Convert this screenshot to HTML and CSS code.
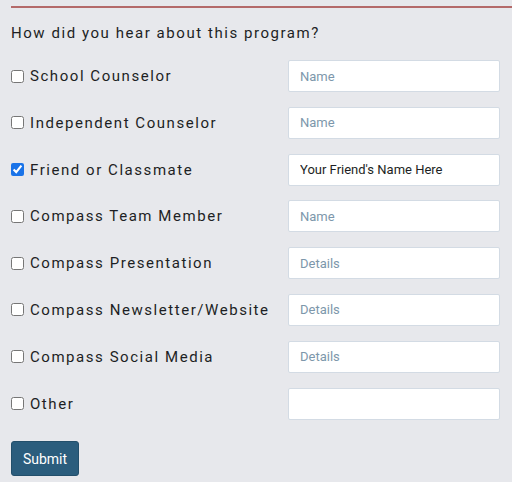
FILE: index.html
```html
<!DOCTYPE html>
<html>
<head>
<meta charset="utf-8">
<link rel="stylesheet" href="styles.css">
</head>
<body>
<div class="page">
  <hr class="rule">
  <p class="question">How did you hear about this program?</p>
  <form class="form">
    <div class="row"><label class="opt"><input type="checkbox"><span>School Counselor</span></label><input class="field" type="text" placeholder="Name"></div>
    <div class="row"><label class="opt"><input type="checkbox"><span>Independent Counselor</span></label><input class="field" type="text" placeholder="Name"></div>
    <div class="row"><label class="opt"><input type="checkbox" checked><span>Friend or Classmate</span></label><input class="field" type="text" value="Your Friend's Name Here"></div>
    <div class="row"><label class="opt"><input type="checkbox"><span>Compass Team Member</span></label><input class="field" type="text" placeholder="Name"></div>
    <div class="row"><label class="opt"><input type="checkbox"><span>Compass Presentation</span></label><input class="field" type="text" placeholder="Details"></div>
    <div class="row"><label class="opt"><input type="checkbox"><span>Compass Newsletter/Website</span></label><input class="field" type="text" placeholder="Details"></div>
    <div class="row"><label class="opt"><input type="checkbox"><span>Compass Social Media</span></label><input class="field" type="text" placeholder="Details"></div>
    <div class="row"><label class="opt"><input type="checkbox"><span>Other</span></label><input class="field" type="text"></div>
    <button class="submit" type="button">Submit</button>
  </form>
</div>
</body>
</html>
```
FILE: styles.css
```css
html, body {
  margin: 0;
  padding: 0;
  background: #e7e8ec;
}
.page {
  padding: 6px 0 0 11px;
  font-family: Roboto, "Liberation Sans", sans-serif;
  color: #1d1f24;
}
.rule {
  margin: 0;
  border: none;
  border-top: 2px solid #b46a6a;
  height: 0;
}
.question {
  margin: 15px 0 0 0;
  font-size: 15px;
  letter-spacing: 1.55px;
  line-height: 20px;
}
.form {
  margin-top: 17px;
  width: 489px;
}
.row {
  display: grid;
  grid-template-columns: 277px 212px;
  align-items: center;
  height: 32px;
  margin-bottom: 14.8px;
}
.opt {
  display: flex;
  align-items: center;
  font-size: 15px;
  letter-spacing: 1.55px;
}
.opt input {
  margin: 0 6px 0 0;
  width: 13px;
  height: 13px;
  accent-color: #1a73e8;
}
.field {
  box-sizing: border-box;
  width: 212px;
  height: 32px;
  margin: 0;
  border: 1px solid #d3dbe4;
  border-radius: 2px;
  background: #ffffff;
  padding: 0 11px;
  font-family: Roboto, "Liberation Sans", sans-serif;
  font-size: 13px;
  color: #1d1f24;
}
.field::placeholder {
  color: #7d97ab;
}
.submit {
  margin-top: 7px;
  width: 68px;
  height: 35px;
  border: 1px solid #234f6b;
  border-radius: 3px;
  background: #2b5d7d;
  color: #ffffff;
  font-family: Roboto, "Liberation Sans", sans-serif;
  font-size: 14px;
  padding: 0;
}
```
